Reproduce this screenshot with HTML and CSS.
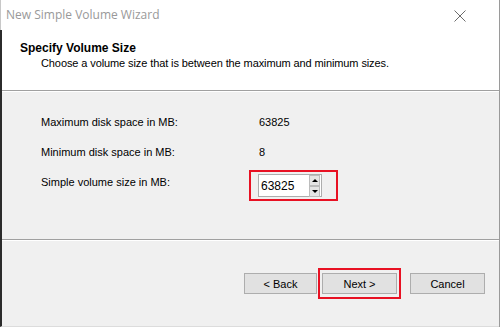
FILE: index.html
```html
<!DOCTYPE html>
<html lang="en">
<head>
    <meta charset="UTF-8">
    <title>New Simple Volume Wizard</title>
    <link rel="stylesheet" href="styles.css">
</head>
<body>
    <div class="window">
        <div class="titlebar">
            <span class="title">New Simple Volume Wizard</span>
            <svg class="close" width="12" height="12" viewBox="0 0 12 12">
                <path d="M0.5 0.5 L11.5 11.5 M11.5 0.5 L0.5 11.5" stroke="#6b6b6b" stroke-width="1" fill="none"/>
            </svg>
        </div>
        <div class="dialog">
            <div class="header">
                <h1>Specify Volume Size</h1>
                <p>Choose a volume size that is between the maximum and minimum sizes.</p>
            </div>
            <div class="divider"></div>
            <div class="content">
                <div class="row">
                    <span class="label">Maximum disk space in MB:</span>
                    <span class="value">63825</span>
                </div>
                <div class="row">
                    <span class="label">Minimum disk space in MB:</span>
                    <span class="value">8</span>
                </div>
                <div class="row">
                    <span class="label">Simple volume size in MB:</span>
                    <div class="highlight spin-wrap">
                        <div class="spin">
                            <span class="spin-text">63825</span>
                            <div class="spin-btns">
                                <div class="spin-btn"><span class="arrow up"></span></div>
                                <div class="spin-btn"><span class="arrow down"></span></div>
                            </div>
                        </div>
                    </div>
                </div>
            </div>
            <div class="divider"></div>
            <div class="footer">
                <button class="btn back">&lt; Back</button>
                <div class="highlight next-wrap">
                    <button class="btn">Next &gt;</button>
                </div>
                <button class="btn cancel">Cancel</button>
            </div>
        </div>
    </div>
</body>
</html>
```

FILE: styles.css
```css
body {
    margin: 0;
    font-family: "Liberation Sans", Arial, sans-serif;
    font-size: 11px;
    color: #000;
    background-color: #fff;
}
.window {
    width: 500px;
    height: 327px;
    display: flex;
    flex-direction: column;
    box-sizing: border-box;
    border-right: 1px solid #9a9a9a;
}
.titlebar {
    height: 30px;
    display: flex;
    align-items: center;
    justify-content: space-between;
    padding: 0 33px 0 5px;
    background-color: #fff;
    border-left: 1px solid #c8c8c8;
    box-sizing: border-box;
}
.title {
    font-family: "Open Sans", sans-serif;
    font-size: 12px;
    color: #999;
    margin-top: -1px;
}
.close {
    display: block;
    margin-top: 2px;
}
.dialog {
    flex-grow: 1;
    display: flex;
    flex-direction: column;
    border-left: 2px solid #2b2b2b;
    border-bottom: 1px solid #dcdcdc;
}
.header {
    height: 60px;
    background-color: #fff;
    padding: 11px 0 0 18px;
    box-sizing: border-box;
}
.header h1 {
    margin: 0;
    font-size: 12px;
    line-height: 14px;
    font-weight: bold;
}
.header p {
    margin: 2px 0 0 21px;
    line-height: 13px;
    letter-spacing: -0.1px;
}
.divider {
    height: 1px;
    background-color: #a0a0a0;
    border-bottom: 1px solid #fff;
}
.content {
    height: 147px;
    background-color: #f0f0f0;
    padding: 15px 0 0 39px;
    box-sizing: border-box;
}
.row {
    display: flex;
    align-items: center;
    height: 30px;
}
.label {
    width: 208px;
}
.value {
    padding-left: 10px;
}
.highlight {
    border: 2px solid #e81123;
}
.spin-wrap {
    padding: 2px 14px 2px 7px;
    margin-top: 7px;
}
.spin {
    width: 64px;
    height: 23px;
    box-sizing: border-box;
    border: 1px solid #adadad;
    background-color: #fff;
    display: flex;
    align-items: center;
    justify-content: space-between;
    padding-left: 2px;
}
.spin-text {
    font-size: 12px;
}
.spin-btns {
    display: flex;
    flex-direction: column;
    padding: 0 1px;
}
.spin-btn {
    width: 9px;
    height: 9px;
    background-color: #e5e5e5;
    border: 1px solid #bcbcbc;
    display: flex;
    align-items: center;
    justify-content: center;
}
.arrow {
    width: 0;
    height: 0;
    border-left: 3px solid transparent;
    border-right: 3px solid transparent;
}
.arrow.up {
    border-bottom: 3px solid #000;
}
.arrow.down {
    border-top: 3px solid #000;
}
.footer {
    flex-grow: 1;
    background-color: #f0f0f0;
    display: flex;
    align-items: center;
    justify-content: flex-end;
    padding-right: 14px;
}
.btn {
    width: 75px;
    height: 21px;
    margin: 0;
    padding: 0;
    font-family: "Liberation Sans", Arial, sans-serif;
    font-size: 11px;
    color: #000;
    background-color: #e1e1e1;
    border: 1px solid #adadad;
}
.back {
    width: 73px;
    margin-right: 1px;
}
.next-wrap {
    padding: 3px 2px;
    display: flex;
}
.cancel {
    margin-left: 9px;
}
```
